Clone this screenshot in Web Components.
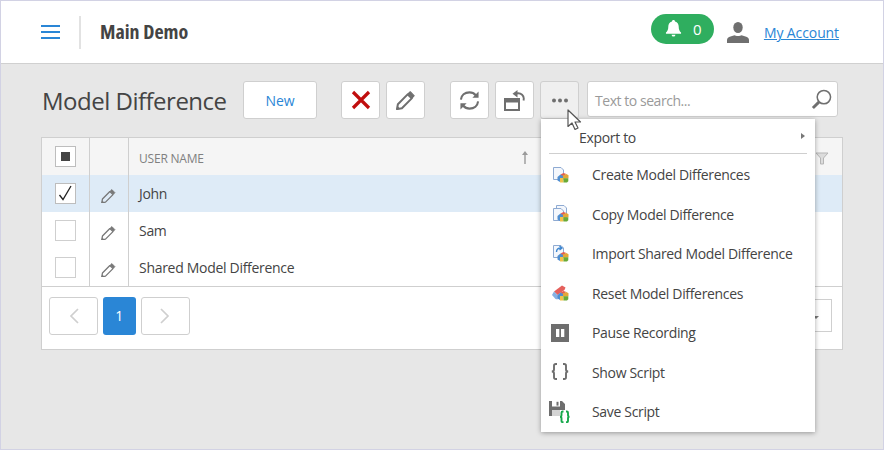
<!DOCTYPE html>
<html><head><meta charset="utf-8"><title>Model Difference</title>
<style>
html,body{margin:0;padding:0;height:100%;background:#e7e7e7}
body{font-family:"Open Sans","Noto Sans",sans-serif;color:#444}
</style></head><body>
<x-app>
  <x-header slot="header" title-text="Main Demo" count="0" account="My Account"></x-header>
  <x-toolbar slot="toolbar" heading="Model Difference"></x-toolbar>
  <x-grid slot="grid">
    <x-row name="John" selected checked></x-row>
    <x-row name="Sam"></x-row>
    <x-row name="Shared Model Difference"></x-row>
  </x-grid>
  <x-menu slot="menu">
    <x-menu-item icon="create">Create Model Differences</x-menu-item>
    <x-menu-item icon="copy">Copy Model Difference</x-menu-item>
    <x-menu-item icon="import">Import Shared Model Difference</x-menu-item>
    <x-menu-item icon="reset">Reset Model Differences</x-menu-item>
    <x-menu-item icon="pause">Pause Recording</x-menu-item>
    <x-menu-item icon="show">Show Script</x-menu-item>
    <x-menu-item icon="save">Save Script</x-menu-item>
  </x-menu>
  <x-cursor slot="menu"></x-cursor>
</x-app>
<script>
const pencil=(s,c,w)=>`<svg width="${s}" height="${s}" viewBox="0 0 18 18" fill="none"><path d="M1.800 12.500L11 3.200 14.900 7 5.600 16.300.9 17.200z" stroke="${c}" stroke-width="${w}" stroke-linejoin="round"/><path d="M11.500 2.600l2-1.900 3.800 3.800-1.900 2z" fill="${c}" stroke="${c}" stroke-linejoin="round"/><path d="M.9 17.200l.6-3 2.500 2.500z" fill="${c}"/></svg>`;
const blocks=`<g><path d="M6.500 11l3-2.500 3 1-.5 5.500-3 1-2.500-1.500z" fill="#4f8ed0"/><path d="M9.500 8.500l3-1.500 3 1-3.500 2z" fill="#e2604f"/><path d="M12 9.500l3.500-1.500 2 1.300v3l-5.500.5z" fill="#e3a63a"/><path d="M9 12h3.500v4.500H9z" fill="#efc24a"/><path d="M12.500 12.300h4.800v3l-1.300 1.300h-3.500z" fill="#69aa36"/></g>`;
const doc=(x,y)=>`<path d="M${x}.5 ${y}.5h7.500l2.500 2.500v9.500h-10z" fill="#f4f7fc" stroke="#8eaad2"/>`;
const menuIcons={
 create:`<svg width="18" height="18" viewBox="0 0 18 18">${doc(2,1)}${blocks}</svg>`,
 copy:`<svg width="18" height="18" viewBox="0 0 18 18">${doc(5,0)}${doc(2,3)}${blocks}</svg>`,
 import:`<svg width="18" height="18" viewBox="0 0 18 18">${doc(2,0)}<path d="M5.500 7c0-2.800 1.800-4 4.500-4M8.500 1l2.500 2-2.500 2" fill="none" stroke="#3f87d0" stroke-width="1.400"/>${blocks}</svg>`,
 reset:`<svg width="18" height="18" viewBox="0 0 18 18"><path d="M3 7.500l8-6 3.500 2-1 2.500-7 5z" fill="#e5605c"/><path d="M1 11l2-3.500 3.500 3.500 1 2-1 2.500-2-.5z" fill="#86b1e3"/>${blocks}</svg>`,
 pause:`<svg width="18" height="18" viewBox="0 0 18 18"><rect width="18" height="18" fill="#6e6e6e"/><rect x="5" y="5" width="3.300" height="8" fill="#fff"/><rect x="10" y="5" width="3.300" height="8" fill="#fff"/></svg>`,
 show:`<svg width="18" height="18" viewBox="0 0 18 18" fill="none" stroke="#6e6e6e" stroke-width="1.900"><path d="M6 1H4.800Q3 1 3 2.800V6.500Q3 8.500 .8 8.500Q3 8.500 3 10.500V14.200Q3 16 4.800 16H6"/><path d="M12 1H13.200Q15 1 15 2.800V6.500Q15 8.500 17.200 8.500Q15 8.500 15 10.500V14.200Q15 16 13.200 16H12"/></svg>`,
 save:`<svg width="22" height="22" viewBox="0 0 22 22"><path d="M0 0h13l3 3v6h-5v6H0z" fill="#6e6e6e"/><rect x="3" y="0" width="8" height="5.500" fill="#fff"/><rect x="7.500" y=".8" width="2" height="3.800" fill="#6e6e6e"/><rect x="3" y="9" width="8" height="6" fill="#d4d4d4"/><g fill="none" stroke="#15a84a" stroke-width="1.900"><path d="M14.500 10.500h-.8q-1.200 0-1.200 1.200v2.300q0 1.800-1.500 1.800q1.500 0 1.500 1.800v2.300q0 1.200 1.200 1.200h.8"/><path d="M17 10.500h.8q1.200 0 1.200 1.200v2.300q0 1.800 1.500 1.800q-1.500 0-1.500 1.800v2.300q0 1.200-1.200 1.200H17"/></g></svg>`
};
function def(name,css,html){
  customElements.define(name,class extends HTMLElement{
    connectedCallback(){
      if(this.shadowRoot)return;
      const r=this.attachShadow({mode:'open'});
      r.innerHTML=`<style>${css}</style>`+(typeof html==='function'?html(this):html);
    }
  });
}
def('x-app',`
:host{display:grid;grid-template-rows:63px 1fr;grid-template-columns:minmax(0,1fr);height:450px;box-sizing:border-box;border:1px solid #d2d2e4;position:relative;overflow:hidden;background:#e7e7e7}
.main{display:flex;flex-direction:column;padding:17px 40px 0 40px;gap:18px}
`,`<slot name="header"></slot><div class="main"><slot name="toolbar"></slot><slot name="grid"></slot></div><slot name="menu"></slot>`);
def('x-header',`
:host{display:flex;align-items:center;background:#fff;border-bottom:1px solid #d0d0d0;box-sizing:border-box;height:63px;padding-left:40px;padding-right:44px}
.burger{width:19px;height:14px;display:flex;flex-direction:column;justify-content:space-between;margin-right:19px}
.burger i{display:block;height:2px;background:#2a86d6}
.sep{width:2px;height:33px;background:#e2e2e2;margin-right:19px}
.title{font:700 20px/1 "Open Sans",sans-serif;font-stretch:75%;color:#444;flex:1;margin-top:-1px}
.pill{width:63px;height:30px;border-radius:15px;background:#2fae5f;display:flex;align-items:center;gap:11px;color:#fff;font-size:15px;box-sizing:border-box;padding-left:14px;margin-top:-7px}
.user{margin:0 15px 0 13px;display:flex}
a{color:#2a86d6;font-size:14px;letter-spacing:-.1px;text-decoration:underline;margin-top:1px}
`,h=>`<div class="burger"><i></i><i></i><i></i></div><div class="sep"></div><div class="title">${h.getAttribute('title-text')}</div>
<div class="pill"><svg width="17" height="19" viewBox="0 0 18 20" fill="#fff"><path d="M9 1c1 0 1.500.6 1.600 1.500C13.500 3.200 14.500 5.500 14.500 8c0 3 .8 5 2.500 6.300V15.500H1v-1.200C2.700 13 3.500 11 3.500 8c0-2.500 1-4.800 3.900-5.500C7.500 1.600 8 1 9 1z"/><path d="M7 16.500h4a2 2 0 0 1-4 0z"/></svg><span>${h.getAttribute('count')}</span></div>
<div class="user"><svg width="22" height="21" viewBox="0 0 22 21" fill="#6f6f6f"><ellipse cx="11" cy="5.500" rx="4.700" ry="5.500"/><path d="M0 21v-3c0-2 1.500-3 3.500-3.500l4-1.300c1 1 5.800 1 7 0l4 1.300c2 .5 3.500 1.500 3.500 3.500v3z"/></svg></div>
<a href="#">${h.getAttribute('account')}</a>`);
def('x-icon-button',`
:host{display:flex;align-items:center;justify-content:center;box-sizing:border-box;background:#fff;border:1px solid #cfcfcf;border-radius:3px;height:38px;width:39px;flex:none}
:host([active]){background:#efefef}
:host([text]){width:74px;color:#2a86d6;font-size:14px;letter-spacing:-.1px;padding-top:1px}
`,`<slot></slot>`);
const refresh=`<svg width="21" height="21" viewBox="0 0 22 22" fill="none" stroke="#6f6f6f" stroke-width="2.200"><path d="M2 10C2.500 5.500 6 2.500 11 2.500c2.800 0 5 1.200 6.500 3"/><path d="M20 12c-.5 4.500-4 7.500-9 7.500-2.800 0-5-1.200-6.500-3"/><path d="M20.500 1.500v6.500h-6.500z" fill="#6f6f6f" stroke="none"/><path d="M1.500 20.500v-6.500h6.500z" fill="#6f6f6f" stroke="none"/></svg>`;
const unlock=`<svg width="21" height="21" viewBox="0 0 21 21"><path d="M0 8h16v13H0z" fill="#6f6f6f"/><rect x="2" y="12.500" width="12" height="6.500" fill="#fff"/><path d="M19.500 10.500C20.800 5.500 17 2.300 12 3.500" fill="none" stroke="#6f6f6f" stroke-width="1.900"/><path d="M13.500 0v7.500L8.500 3.800z" fill="#6f6f6f"/></svg>`;
def('x-toolbar',`
:host{display:flex;align-items:center;height:38px}
h1{font-weight:400;font-size:24px;letter-spacing:-.5px;margin:0;color:#444;width:202px;box-sizing:border-box;padding:1px 0 0 1px;white-space:nowrap}
.g{display:flex;gap:6px;margin-left:24px}
.g+.g{margin-left:25px}
.search{margin-left:2px;flex:none;width:251px;height:36px;box-sizing:border-box;background:#fff;border:1px solid #cfcfcf;border-radius:3px;display:flex;align-items:center;justify-content:space-between;padding:0 5px 0 7px;color:#9a9a9a;font-size:14px;letter-spacing:-.45px}
.search span{padding-top:2px}
`,h=>`<h1>${h.getAttribute('heading')}</h1>
<x-icon-button text>New</x-icon-button>
<div class="g"><x-icon-button><svg width="22" height="22" viewBox="0 0 22 22"><path d="M3 3l16 16M19 3L3 19" stroke="#c00d0d" stroke-width="3.200"/></svg></x-icon-button><x-icon-button>${pencil(19,'#6f6f6f',1.9)}</x-icon-button></div>
<div class="g"><x-icon-button>${refresh}</x-icon-button><x-icon-button>${unlock}</x-icon-button><x-icon-button active><svg width="18" height="5" viewBox="0 0 18 5" fill="#6f6f6f"><circle cx="3" cy="2.500" r="2"/><circle cx="9" cy="2.500" r="2"/><circle cx="15" cy="2.500" r="2"/></svg></x-icon-button><div class="search"><span>Text to search...</span><svg width="21" height="21" viewBox="0 0 22 22" fill="none" stroke="#6f6f6f"><circle cx="13.500" cy="8.500" r="7" stroke-width="1.600"/><path d="M8.500 13.500L2 20" stroke-width="3"/></svg></div></div>`);
const box=(inner='')=>`<span class="box">${inner}</span>`;
const boxCss=`.box{width:21px;height:21px;box-sizing:border-box;background:#fff;border:1px solid #cfcfcf;display:flex;align-items:center;justify-content:center}.box:has(svg){border-color:#bdbdbd}`;
def('x-grid',`
:host{display:block;width:802px;box-sizing:border-box;border:1px solid #cfcfcf;background:#fff;height:213px}
.head{display:grid;grid-template-columns:48px 39px 1fr;height:37px;background:#f5f5f5;align-items:stretch}
.head>div{display:flex;align-items:center;justify-content:center;border-right:1px solid #cfcfcf}
.head>div:last-child{border:0;justify-content:flex-start;padding:3px 0 0 10px;color:#808080;font-size:12px;letter-spacing:-.2px;position:relative}
.head .sort{position:absolute;left:392px;top:12px}
.head .filter{position:absolute;right:13px;top:14px}
${boxCss}
.foot{border-top:1px solid #cfcfcf;height:63px;box-sizing:border-box;padding:10px 10px 0 7px;display:flex;gap:4.500px;overflow:hidden}
.nav{width:49px;height:37.500px;box-sizing:border-box;border:1px solid #cfcfcf;border-radius:3px;display:flex;align-items:center;justify-content:center}
.one{width:33.500px;height:37.500px;background:#2a86d6;color:#fff;border-radius:3px;display:flex;align-items:center;justify-content:center;font-size:14px}
.size{margin-left:auto;width:60px;height:33px;margin-top:2px;border:1px solid #cfcfcf;box-sizing:border-box;display:flex;align-items:center;justify-content:flex-end;padding-right:12px}
.size i{border-top:3px solid #777;border-left:3px solid transparent;border-right:3px solid transparent;margin-top:3px}
`,`<div class="head"><div>${box('<svg width="9" height="9"><rect width="9" height="9" fill="#444"/></svg>')}</div><div></div><div>USER NAME<svg class="sort" width="8" height="15" viewBox="0 0 8 15"><path d="M4 1L1 5h2.300v9h1.400V5H7z" fill="#9a9a9a"/></svg><svg class="filter" width="14" height="13" viewBox="0 0 14 13"><path d="M1 1h12L8.500 6v6h-3V6z" fill="#dcdcdc" stroke="#b5b5b5"/></svg></div></div>
<slot></slot>
<div class="foot"><div class="nav"><svg width="12" height="16" viewBox="0 0 12 16" fill="none" stroke="#cfcfcf" stroke-width="1.700"><path d="M10 1L3 8l7 7"/></svg></div><div class="one">1</div><div class="nav"><svg width="12" height="16" viewBox="0 0 12 16" fill="none" stroke="#cfcfcf" stroke-width="1.700"><path d="M2 1l7 7-7 7"/></svg></div><div class="size"><i></i></div></div>`);
def('x-row',`
:host{display:grid;grid-template-columns:48px 39px 1fr;height:37px;font-size:14px;letter-spacing:-.3px;color:#444;background:#fff}
:host([selected]){background:#deebf7}
.c{display:flex;align-items:center;justify-content:center;border-right:1px solid #cfcfcf}
.n{padding:0 0 1px 10px;display:flex;align-items:center;white-space:nowrap}
.p{padding:5px 1px 0 0;display:flex}
${boxCss}.box{margin-top:-1px}
`,h=>`<div class="c">${box(h.hasAttribute('checked')?'<svg width="15" height="17" viewBox="0 0 15 17" fill="none" stroke="#222" stroke-width="1.300"><path d="M1.500 10l3.500 4.500L13 1"/></svg>':'')}</div><div class="c"><span class="p">${pencil(14.5,'#777',1.6)}</span></div><div class="n">${h.getAttribute('name')}</div>`);
def('x-menu',`
:host{position:absolute;left:540px;top:118px;width:274px;height:313px;box-sizing:border-box;background:#fff;box-shadow:0 1px 5px rgba(0,0,0,.35);display:flex;flex-direction:column;font-size:14px;letter-spacing:-.33px;color:#444}
.exp{height:35px;box-sizing:border-box;margin:0 8px;padding:2px 2px 0 30px;border-bottom:1px solid #cfcfcf;display:flex;align-items:center;justify-content:space-between}
.items{padding-top:1px;display:flex;flex-direction:column}
i{border-left:4px solid #777;border-top:3.500px solid transparent;border-bottom:3.500px solid transparent;margin-top:-3px}
`,`<div class="exp"><span>Export to</span><i></i></div><div class="items"><slot></slot></div>`);
def('x-menu-item',`
:host{display:flex;align-items:center;height:39.500px;padding-left:10px;white-space:nowrap}
.i{width:18px;height:18px;margin-right:23px;display:flex;flex:none;align-items:center;justify-content:center}
svg{flex:none}
`,h=>`<span class="i">${menuIcons[h.getAttribute('icon')]}</span><slot></slot>`);
def('x-cursor',`:host{position:absolute;left:566px;top:108px;display:block;width:15px;height:23px}`,`<svg width="15" height="23" viewBox="0 0 15 23"><path d="M1 1v16.500l4-3.500 3 6.500 3-1.500-3-6h5.500z" fill="#fff" stroke="#555" stroke-width="1.200" stroke-linejoin="round"/></svg>`);
</script>
</body></html>
